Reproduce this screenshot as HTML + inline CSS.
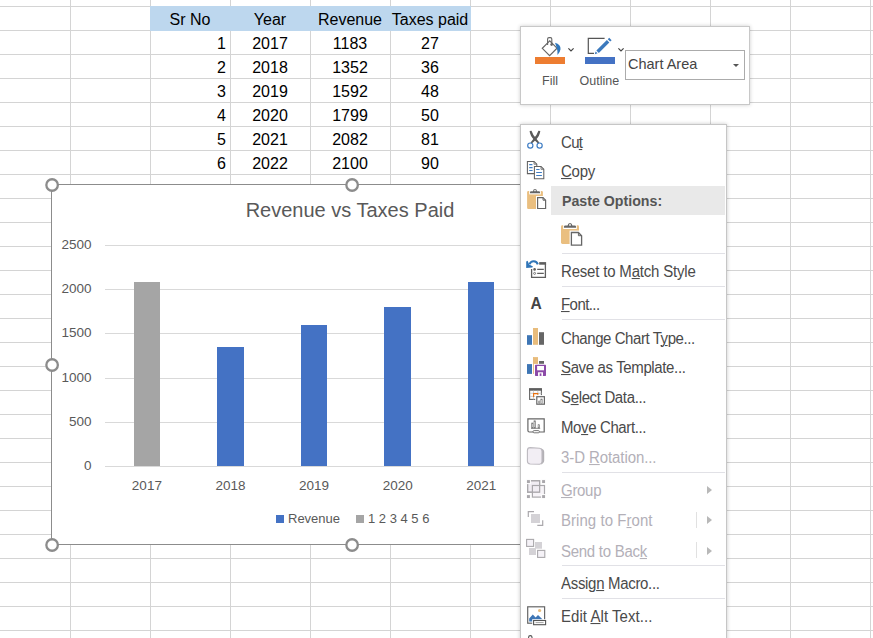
<!DOCTYPE html>
<html>
<head>
<meta charset="utf-8">
<title>Excel chart context menu</title>
<style>
html,body{margin:0;padding:0;}
body{width:873px;height:638px;overflow:hidden;position:relative;background:#fff;font-family:"Liberation Sans",sans-serif;}
#grid{position:absolute;left:0;top:0;width:873px;height:638px;
 background-image:
  linear-gradient(to right,#d4d4d4 1px,transparent 1px),
  linear-gradient(to bottom,#d4d4d4 1px,transparent 1px);
 background-size:80px 100%,100% 24px;
 background-position:70px 0,0 6px;}
#hdr{position:absolute;left:150px;top:6px;width:321px;height:25px;background:#bdd7ee;}
.c{position:absolute;height:24px;line-height:24px;font-size:16px;color:#000;white-space:nowrap;}
.ctr{text-align:center;width:80px;}
.rt{text-align:right;width:76px;}
#chart{position:absolute;left:51px;top:184px;width:602px;height:361px;background:#fff;border:1px solid #8c8c8c;box-sizing:border-box;}
.gl{position:absolute;left:105px;width:502px;height:1px;background:#d9d9d9;}
.yl{position:absolute;width:40.5px;text-align:right;font-size:13.5px;line-height:14px;color:#595959;left:51px;}
.xl{position:absolute;width:60px;text-align:center;font-size:13.5px;line-height:14px;color:#595959;}
.bar{position:absolute;background:#4472c4;}
.h{position:absolute;width:9.2px;height:9.2px;border:2.2px solid #8c8c8c;border-radius:50%;background:#fff;}
#title{position:absolute;left:150px;top:198px;width:400px;text-align:center;font-size:20px;line-height:24px;color:#595959;white-space:nowrap;}
.lg{position:absolute;font-size:13px;line-height:14px;color:#595959;white-space:nowrap;}
.sq{position:absolute;width:8px;height:8px;}
/* mini toolbar */
#tb{position:absolute;left:520px;top:26px;width:230px;height:79px;background:#fff;border:1px solid #c8c8c8;box-sizing:border-box;box-shadow:0 0 4px rgba(0,0,0,0.2);}
.tbl{position:absolute;font-size:12.5px;line-height:14px;color:#555;white-space:nowrap;}
#dd{position:absolute;left:625px;top:50px;width:120px;height:30px;border:1px solid #ababab;box-sizing:border-box;background:#fff;}
#ddt{position:absolute;left:628px;top:54px;font-size:14.5px;line-height:20px;color:#444;white-space:nowrap;}
/* menu */
#menu{position:absolute;left:520px;top:124px;width:207px;height:530px;background:#fff;border:1px solid #c6c6c6;box-sizing:border-box;box-shadow:0 0 4px rgba(0,0,0,0.22);}
.mi{position:absolute;left:561px;font-size:15px;line-height:20px;transform:scaleY(1.04);transform-origin:0 15.2px;color:#4a4a4a;white-space:nowrap;}
.mi u{text-decoration:underline;text-underline-offset:1px;text-decoration-thickness:1px;}
.dis{color:#b3b0b8;}
.sep{position:absolute;left:562px;width:163px;height:1px;background:#e1e1e6;}
.arr{position:absolute;width:0;height:0;border-left:5px solid #b8b8b8;border-top:4.5px solid transparent;border-bottom:4.5px solid transparent;}
.vs{position:absolute;width:1px;height:16px;background:#e1e1e1;left:696px;}
svg{position:absolute;overflow:visible;}
</style>
</head>
<body>
<div id="grid"></div>
<div id="hdr"></div>
<div class="c ctr" style="left:150px;top:8px">Sr No</div>
<div class="c ctr" style="left:230px;top:8px">Year</div>
<div class="c ctr" style="left:310px;top:8px">Revenue</div>
<div class="c ctr" style="left:390px;top:8px">Taxes paid</div>
<div class="c rt" style="left:150px;top:32px">1</div>
<div class="c ctr" style="left:230px;top:32px">2017</div>
<div class="c ctr" style="left:310px;top:32px">1183</div>
<div class="c ctr" style="left:390px;top:32px">27</div>
<div class="c rt" style="left:150px;top:56px">2</div>
<div class="c ctr" style="left:230px;top:56px">2018</div>
<div class="c ctr" style="left:310px;top:56px">1352</div>
<div class="c ctr" style="left:390px;top:56px">36</div>
<div class="c rt" style="left:150px;top:80px">3</div>
<div class="c ctr" style="left:230px;top:80px">2019</div>
<div class="c ctr" style="left:310px;top:80px">1592</div>
<div class="c ctr" style="left:390px;top:80px">48</div>
<div class="c rt" style="left:150px;top:104px">4</div>
<div class="c ctr" style="left:230px;top:104px">2020</div>
<div class="c ctr" style="left:310px;top:104px">1799</div>
<div class="c ctr" style="left:390px;top:104px">50</div>
<div class="c rt" style="left:150px;top:128px">5</div>
<div class="c ctr" style="left:230px;top:128px">2021</div>
<div class="c ctr" style="left:310px;top:128px">2082</div>
<div class="c ctr" style="left:390px;top:128px">81</div>
<div class="c rt" style="left:150px;top:152px">6</div>
<div class="c ctr" style="left:230px;top:152px">2022</div>
<div class="c ctr" style="left:310px;top:152px">2100</div>
<div class="c ctr" style="left:390px;top:152px">90</div>
<div id="chart"></div>
<div class="gl" style="top:466px"></div>
<div class="yl" style="top:459px">0</div>
<div class="gl" style="top:422px"></div>
<div class="yl" style="top:415px">500</div>
<div class="gl" style="top:378px"></div>
<div class="yl" style="top:371px">1000</div>
<div class="gl" style="top:333px"></div>
<div class="yl" style="top:326px">1500</div>
<div class="gl" style="top:289px"></div>
<div class="yl" style="top:282px">2000</div>
<div class="gl" style="top:245px"></div>
<div class="yl" style="top:238px">2500</div>
<div id="title">Revenue vs Taxes Paid</div>
<div class="bar" style="left:134px;top:282px;width:26px;height:184px;background:#a5a5a5"></div>
<div class="xl" style="left:116.9px;top:479px">2017</div>
<div class="bar" style="left:217px;top:347px;width:27px;height:119px;background:#4472c4"></div>
<div class="xl" style="left:200.5px;top:479px">2018</div>
<div class="bar" style="left:301px;top:325px;width:26px;height:141px;background:#4472c4"></div>
<div class="xl" style="left:284.1px;top:479px">2019</div>
<div class="bar" style="left:384px;top:307px;width:27px;height:159px;background:#4472c4"></div>
<div class="xl" style="left:367.7px;top:479px">2020</div>
<div class="bar" style="left:468px;top:282px;width:26px;height:184px;background:#4472c4"></div>
<div class="xl" style="left:451.3px;top:479px">2021</div>
<div class="bar" style="left:551px;top:280px;width:27px;height:186px;background:#4472c4"></div>
<div class="xl" style="left:534.9px;top:479px">2022</div>
<div class="sq" style="left:276px;top:515px;background:#4472c4"></div>
<div class="lg" style="left:288px;top:512px">Revenue</div>
<div class="sq" style="left:356px;top:515px;background:#a5a5a5"></div>
<div class="lg" style="left:368px;top:512px">1 2 3 4 5 6</div>
<svg style="left:0;top:0" width="873" height="638" viewBox="0 0 873 638"><circle cx="52.1" cy="185" r="5.75" fill="#fff" stroke="#8c8c8c" stroke-width="2.3"/><circle cx="352.1" cy="185" r="5.75" fill="#fff" stroke="#8c8c8c" stroke-width="2.3"/><circle cx="653" cy="185" r="5.75" fill="#fff" stroke="#8c8c8c" stroke-width="2.3"/><circle cx="52.1" cy="365" r="5.75" fill="#fff" stroke="#8c8c8c" stroke-width="2.3"/><circle cx="653" cy="365" r="5.75" fill="#fff" stroke="#8c8c8c" stroke-width="2.3"/><circle cx="52.1" cy="545" r="5.75" fill="#fff" stroke="#8c8c8c" stroke-width="2.3"/><circle cx="352.1" cy="545" r="5.75" fill="#fff" stroke="#8c8c8c" stroke-width="2.3"/><circle cx="653" cy="545" r="5.75" fill="#fff" stroke="#8c8c8c" stroke-width="2.3"/></svg>
<div id="tb"></div>
<svg id="tbicons" style="left:0;top:0" width="873" height="638" viewBox="0 0 873 638">
<rect x="535" y="57" width="30" height="7" fill="#ed7d31"/>
<rect x="585" y="57" width="30" height="7" fill="#4472c4"/>
<!-- paint bucket -->
<path d="M549.7 40.8 L542.3 48.3 L549.6 55.6 L557 48.2 Z" fill="#fff" stroke="#666" stroke-width="1.2" stroke-linejoin="miter"/>
<path d="M547.6 45 V39 Q547.6 37.6 549 37.6 H550.4 Q551.8 37.6 551.8 39 V44" fill="none" stroke="#666" stroke-width="1.1"/>
<circle cx="551.6" cy="44.6" r="1.3" fill="#666"/>
<path d="M555 42.8 Q560.9 44.4 560.5 49.2 Q560 52.6 557.5 55 Q557.8 51 556.9 48.4 Q556 45.6 555 42.8 Z" fill="#2f78bd"/>
<!-- outline pencil -->
<path d="M604.6 38.3 H588.3 V53.4 H594" fill="none" stroke="#555" stroke-width="1.2"/>
<path d="M597.6 53.3 L594.8 54.3 L595.6 51.4 Z" fill="#3b79bd"/>
<path d="M596.4 50.6 L606.9 40.1 L609.3 42.5 L598.8 53 Z" fill="#3b79bd"/>
<path d="M607.8 39.2 L609.2 37.8 L611.6 40.2 L610.2 41.6 Z" fill="#3b79bd"/>
<!-- chevrons -->
<path d="M568.4 48.4 L571 51 L573.6 48.4" fill="none" stroke="#444" stroke-width="1.2"/>
<path d="M618.4 48.4 L621 51 L623.6 48.4" fill="none" stroke="#444" stroke-width="1.2"/>
</svg>

<div class="tbl" style="left:542px;top:74px">Fill</div>
<div class="tbl" style="left:579.5px;top:74px">Outline</div>
<div id="dd"></div><div id="ddt">Chart Area</div>
<div style="position:absolute;left:733px;top:64px;width:0;height:0;border-top:3.5px solid #555;border-left:3.5px solid transparent;border-right:3.5px solid transparent"></div>
<div id="menu"></div>
<div style="position:absolute;left:551px;top:186px;width:174px;height:29px;background:#e9e9e9"></div>
<div class="mi" id="mi0" style="top:132.5px;letter-spacing:-0.700px">Cu<u>t</u></div>
<div class="mi" id="mi1" style="top:161.5px;letter-spacing:-0.267px"><u>C</u>opy</div>
<div class="mi" id="mi2" style="top:262.1px;letter-spacing:-0.189px">Reset to M<u>a</u>tch Style</div>
<div class="mi" id="mi3" style="top:295.0px;letter-spacing:-0.567px"><u>F</u>ont...</div>
<div class="mi" id="mi4" style="top:328.5px;letter-spacing:-0.432px">Change Chart T<u>y</u>pe...</div>
<div class="mi" id="mi5" style="top:358.3px;letter-spacing:-0.367px"><u>S</u>ave as Template...</div>
<div class="mi" id="mi6" style="top:388.2px;letter-spacing:-0.354px">S<u>e</u>lect Data...</div>
<div class="mi" id="mi7" style="top:417.9px;letter-spacing:-0.383px">Mo<u>v</u>e Chart...</div>
<div class="mi dis" id="mi8" style="top:448.0px;letter-spacing:-0.086px">3-D <u>R</u>otation...</div>
<div class="mi dis" id="mi9" style="top:480.9px;letter-spacing:-0.300px"><u>G</u>roup</div>
<div class="mi dis" id="mi10" style="top:511.2px;letter-spacing:0.046px">Bring to F<u>r</u>ont</div>
<div class="mi dis" id="mi11" style="top:541.7px;letter-spacing:-0.273px">Send to Bac<u>k</u></div>
<div class="mi" id="mi12" style="top:573.9px;letter-spacing:-0.314px">Assig<u>n</u> Macro...</div>
<div class="mi" id="mi13" style="top:606.8px;letter-spacing:0.053px">Edit <u>A</u>lt Text...</div>
<div class="mi" style="top:191px;left:562px;font-weight:bold;font-size:14.2px;color:#555">Paste Options:</div>
<div class="sep" style="top:253px"></div>
<div class="sep" style="top:286px"></div>
<div class="sep" style="top:319px"></div>
<div class="sep" style="top:472px"></div>
<div class="sep" style="top:565px"></div>
<div class="sep" style="top:598px"></div>
<div class="arr" style="left:707px;top:485.5px"></div>
<div class="arr" style="left:707px;top:516.0px"></div>
<div class="arr" style="left:707px;top:546.5px"></div>
<div class="vs" style="top:512px"></div>
<div class="vs" style="top:542px"></div>
<svg id="menuicons" style="left:0;top:0" width="873" height="638" viewBox="0 0 873 638">
<!-- scissors -->
<g>
<path d="M529.6 131 L531.5 130.8 Q532.6 134.6 536.4 138.8 L539.3 142.6 L538.1 143.6 L534.5 140.2 Q530 136 529.6 131 Z" fill="#5a5a5a"/>
<path d="M540.3 131 L538.4 130.8 Q537.3 134.6 533.5 138.8 L530.6 142.6 L531.8 143.6 L535.4 140.2 Q539.9 136 540.3 131 Z" fill="#5a5a5a"/>
<circle cx="530.3" cy="145.6" r="2.6" fill="#fff" stroke="#3f7dc4" stroke-width="1.2"/>
<circle cx="539.6" cy="145.6" r="2.6" fill="#fff" stroke="#3f7dc4" stroke-width="1.2"/>
</g>
<!-- copy -->
<g fill="#fff" stroke="#626262" stroke-width="1.05" stroke-linejoin="miter">
<path d="M527.4 161.4 H534 L536.8 164.2 V173.6 H527.4 Z"/>
<path d="M534 161.4 V164.2 H536.8" fill="none" stroke-width="0.8"/>
<path d="M534.4 166.5 H541 L543.8 169.3 V178.7 H534.4 Z"/>
<path d="M541 166.5 V169.3 H543.8" fill="none" stroke-width="0.8"/>
</g>
<g stroke="#3f7dc4" stroke-width="1.1">
<path d="M529.2 164.6 H532.4 M529.2 167.6 H532.6 M529.2 170.5 H532.6"/>
<path d="M536.2 169.5 H539.6 M536.2 172.5 H541.9 M536.2 175.5 H541.9"/>
</g>
<!-- paste 1 -->
<g>
<rect x="527.1" y="191.1" width="15.8" height="17.8" rx="1.2" fill="#eabf80"/>
<rect x="529.2" y="190.2" width="11.6" height="4.2" fill="#fff"/>
<circle cx="535" cy="190.6" r="2.7" fill="#fff"/>
<path d="M530 193.2 V192.2 Q530 191.2 531 191.2 H533 Q533.2 189 535 189 Q536.8 189 537 191.2 H539 Q540 191.2 540 192.2 V193.2 Z" fill="#666"/>
<circle cx="535" cy="190.6" r="0.8" fill="#fff"/>
<rect x="536" y="196" width="11" height="14" fill="#fff"/>
<path d="M537.6 197.6 H543 L545.6 200.2 V208.5 H537.6 Z" fill="#fff" stroke="#666" stroke-width="1.2"/>
<path d="M543 197.6 V200.2 H545.6" fill="none" stroke="#666" stroke-width="1"/>
</g>
<!-- paste 2 -->
<g>
<rect x="561" y="225.2" width="18" height="18.8" rx="1.4" fill="#eabf80"/>
<rect x="563.2" y="224.2" width="13.6" height="4.8" fill="#fff"/>
<circle cx="570" cy="225" r="3.1" fill="#fff"/>
<path d="M564 227.8 V226.6 Q564 225.5 565.2 225.5 H567.6 Q567.9 223 570 223 Q572.1 223 572.4 225.5 H574.8 Q576 225.5 576 226.6 V227.8 Z" fill="#666"/>
<circle cx="570" cy="224.9" r="0.9" fill="#fff"/>
<rect x="569.6" y="230.6" width="13.6" height="16.2" fill="#fff"/>
<path d="M571.4 232.5 H578.4 L581.6 235.7 V245.2 H571.4 Z" fill="#fff" stroke="#666" stroke-width="1.3"/>
<path d="M578.4 232.5 V235.7 H581.6" fill="none" stroke="#666" stroke-width="1"/>
</g>
<!-- reset to match style -->
<g>
<path d="M531.6 269 V277.3 H545.4 V264" fill="none" stroke="#5e5e5e" stroke-width="1.3"/>
<rect x="539.2" y="262.1" width="6.9" height="2.6" fill="#5e5e5e"/>
<circle cx="534.6" cy="269.4" r="1.3" fill="#5e5e5e"/>
<circle cx="534.6" cy="273.4" r="1.0" fill="#fff" stroke="#5e5e5e" stroke-width="0.8"/>
<path d="M537.2 269.4 H543.8 M537.2 273.4 H543.8" stroke="#5e5e5e" stroke-width="1.1"/>
<path d="M537.8 264.4 A4.3 4.3 0 0 0 529.6 264.2" fill="none" stroke="#2f75b8" stroke-width="2"/>
<path d="M526.2 261.6 L527.6 260.8 L529.2 264.6 L533 266.4 L532.2 267.6 L526.2 268 Z" fill="#2f75b8"/>
</g>
<!-- Font A -->
<text x="0" y="0" transform="translate(530.6 308.8) scale(0.93 1)" font-family="Liberation Sans, sans-serif" font-weight="bold" font-size="16.8" fill="#444">A</text>
<!-- change chart type -->
<rect x="527" y="335.2" width="5" height="9.6" fill="#3e76b5"/>
<rect x="533" y="328" width="5" height="16.8" fill="#e8bc7c"/>
<rect x="539" y="332.2" width="5" height="12.6" fill="#666"/>
<!-- save as template -->
<rect x="527" y="364.1" width="5" height="9.8" fill="#3e76b5"/>
<rect x="533" y="357.1" width="5" height="6.8" fill="#e8bc7c"/>
<rect x="533" y="357.1" width="0.9" height="16.8" fill="#e8bc7c"/>
<rect x="539" y="361" width="5" height="2.8" fill="#666"/>
<rect x="535" y="364.8" width="11" height="11.1" rx="0.6" fill="#8c4aa8"/>
<rect x="537.1" y="366" width="6.9" height="4.3" fill="#fff"/>
<rect x="538" y="372.3" width="5" height="3.6" fill="#fff"/>
<rect x="539.7" y="373.4" width="1.7" height="2.5" fill="#8c4aa8"/>
<!-- select data -->
<g>
<rect x="529.6" y="389" width="11.8" height="10.4" fill="#fff" stroke="#666" stroke-width="1.1"/>
<rect x="529.1" y="388.2" width="12.8" height="2.5" fill="#5e5e5e"/>
<path d="M533.5 390.7 V399.4 M537.8 390.7 V399.4 M530 393.3 H541.4 M530 396.4 H541.4" stroke="#c8c8c8" stroke-width="0.9" fill="none"/>
<path d="M533.6 397 V393.6 H537.8 V394.8" fill="none" stroke="#e8710f" stroke-width="1.1"/>
<rect x="535.2" y="395.1" width="10.6" height="10.5" fill="#fff"/>
<rect x="536.8" y="396.7" width="7.6" height="7.5" fill="#fff" stroke="#666" stroke-width="1.2"/>
<rect x="538.7" y="401" width="1" height="2.4" fill="#ddd" stroke="#777" stroke-width="0.6"/>
<rect x="540.8" y="399" width="1.4" height="4.4" fill="#ddd" stroke="#777" stroke-width="0.6"/>
</g>
<!-- move chart -->
<g>
<path d="M527.9 418.9 H544.2 V432 H539.2 M533.2 432 H529.4 Q527.9 432 527.9 430.5 V418.3" fill="none" stroke="#666" stroke-width="1.2"/>
<rect x="533" y="430.6" width="6.4" height="2.2" rx="1.1" fill="#fff" stroke="#666" stroke-width="0.9"/>
<rect x="531.7" y="423" width="1.3" height="5" fill="#e8e8e8" stroke="#666" stroke-width="0.6"/>
<rect x="534" y="420.8" width="1.5" height="7.2" fill="#e8e8e8" stroke="#666" stroke-width="0.6"/>
<rect x="538.1" y="424.7" width="1.3" height="3.3" fill="#e8e8e8" stroke="#666" stroke-width="0.6"/>
<path d="M531 428.3 H540.2" stroke="#666" stroke-width="0.8"/>
</g>
<!-- 3-D rotation -->
<g>
<path d="M541 448.6 Q544.2 449.4 544.2 452 V460.6 Q544.2 463.4 541 464.4 Z" fill="#b3b1b5"/>
<path d="M530.2 447.6 L539.6 448.2 Q542 448.6 542 451 V461.6 Q542 464 539.6 464.2 L530.2 464 Q527.4 463.8 527.4 461 V450.4 Q527.4 447.6 530.2 447.6 Z" fill="#f2eef4" stroke="#bcb9bf" stroke-width="1.1"/>
</g>
<!-- group -->
<g>
<rect x="527.6" y="480.7" width="12" height="11.5" fill="#f1edf3" stroke="#aaa8ac" stroke-width="1.2"/>
<rect x="532.4" y="485.5" width="12.1" height="11.6" fill="#f1edf3" fill-opacity="0.6" stroke="#aaa8ac" stroke-width="1.2"/>
<rect x="527.6" y="480.7" width="12" height="11.5" fill="none" stroke="#aaa8ac" stroke-width="1.2"/>
<g fill="#a9a7ab" stroke="#fff" stroke-width="1">
<rect x="526.4" y="479.6" width="4" height="4"/>
<rect x="541.6" y="479.6" width="4" height="4"/>
<rect x="526.4" y="494.6" width="4" height="4"/>
<rect x="541.6" y="494.6" width="4" height="4"/>
</g>
</g>
<!-- bring to front -->
<g>
<path d="M528.3 517 V511.6 H534 M537.3 525.4 H542.7 V520.2" fill="none" stroke="#aaa8ac" stroke-width="1.2"/>
<rect x="531" y="514" width="9" height="9" fill="#d4d2d6"/>
</g>
<!-- send to back -->
<g>
<rect x="535" y="542" width="7" height="6.7" fill="#d4d2d6"/>
<rect x="529" y="548" width="7" height="7" fill="#d4d2d6"/>
<rect x="526.6" y="539.4" width="7" height="7" fill="#f5f2f7" stroke="#aaa8ac" stroke-width="1.1"/>
<rect x="537.6" y="550.4" width="7.2" height="7" fill="#f5f2f7" stroke="#aaa8ac" stroke-width="1.1"/>
</g>
<!-- edit alt text -->
<g>
<rect x="527.7" y="606.8" width="16.9" height="16.4" fill="#fff" stroke="#666" stroke-width="1.2"/>
<circle cx="539.6" cy="610.5" r="1.6" fill="#e8bc7c"/>
<path d="M529.2 621.4 V618.4 L532.8 614.4 L535.6 617.4 L538 615 L543.2 620 V621.4 Z" fill="#3e76b5"/>
<rect x="532.2" y="619.2" width="14.6" height="6.6" fill="#fff"/>
<rect x="533.6" y="620.5" width="12" height="4.2" fill="#fff" stroke="#555" stroke-width="1.1"/>
<path d="M535.6 622.6 H543.6" stroke="#999" stroke-width="0.9"/>
</g>
<!-- next item tip -->
<path d="M528.6 638 V637.2 Q528.6 635.6 530.3 635.6 Q532 635.6 532 637.2 V638" fill="none" stroke="#555" stroke-width="1.1"/>
</svg>

</body>
</html>
